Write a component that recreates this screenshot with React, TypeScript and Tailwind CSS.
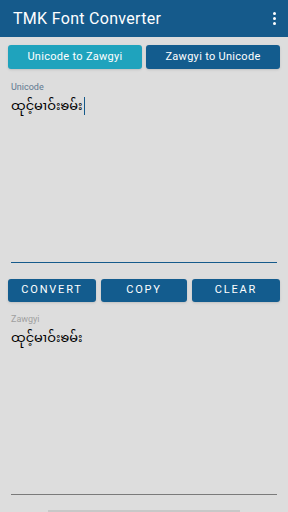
import { useState } from "react";

const SAMPLE = "ထုင့်မၢဝ်းၶမ်း";

export default function App() {
  const [mode, setMode] = useState<"u2z" | "z2u">("u2z");
  const [input, setInput] = useState(SAMPLE);
  const [output, setOutput] = useState(SAMPLE);

  return (
    <div
      className="w-[288px] h-[512px] bg-[#dddddd] flex flex-col overflow-hidden"
      style={{ fontFamily: "Roboto, 'Noto Sans', 'Noto Sans Myanmar', sans-serif" }}
    >
      {/* Toolbar */}
      <div className="h-[37px] bg-[#155a8b] flex items-center justify-between pl-[13px] pr-[12px] shrink-0">
        <span className="text-white text-[16px] tracking-[0.3px]">TMK Font Converter</span>
        <div className="flex flex-col gap-[2px] items-center">
          <span className="w-[3px] h-[3px] rounded-full bg-white" />
          <span className="w-[3px] h-[3px] rounded-full bg-white" />
          <span className="w-[3px] h-[3px] rounded-full bg-white" />
        </div>
      </div>

      {/* Mode tabs */}
      <div className="flex gap-[4px] px-[8px] mt-[8px]">
        <button
          onClick={() => setMode("u2z")}
          className={`flex-1 h-[24px] rounded-[3px] text-white text-[11px] tracking-[0.3px] shadow-sm ${
            mode === "u2z" ? "bg-[#1fa3bd]" : "bg-[#135c8e]"
          }`}
        >
          Unicode to Zawgyi
        </button>
        <button
          onClick={() => setMode("z2u")}
          className={`flex-1 h-[24px] rounded-[3px] text-white text-[11px] tracking-[0.3px] shadow-sm ${
            mode === "z2u" ? "bg-[#1fa3bd]" : "bg-[#135c8e]"
          }`}
        >
          Zawgyi to Unicode
        </button>
      </div>

      {/* Input */}
      <div className="px-[11px] mt-[14px] flex flex-col h-[180px]">
        <span className="text-[9px] text-[#5f7890] leading-none">Unicode</span>
        <div className="flex-1 flex flex-col border-b-[1.5px] border-[#155a8b]">
          <div className="flex items-center mt-[4px]">
            <span className="text-[13px] text-black leading-[20px]">{input}</span>
            <span className="w-[1.5px] h-[18px] bg-[#155a8b] ml-[1px]" />
          </div>
        </div>
      </div>

      {/* Actions */}
      <div className="flex gap-[5px] px-[8px] mt-[16px]">
        <button
          onClick={() => setOutput(input)}
          className="w-[88px] h-[23px] rounded-[3px] bg-[#135c8e] text-white text-[11px] tracking-[1.8px] shadow-sm"
        >
          CONVERT
        </button>
        <button className="flex-1 h-[23px] rounded-[3px] bg-[#135c8e] text-white text-[11px] tracking-[1.8px] shadow-sm">
          COPY
        </button>
        <button
          onClick={() => {
            setInput("");
            setOutput("");
          }}
          className="w-[88px] h-[23px] rounded-[3px] bg-[#135c8e] text-white text-[11px] tracking-[1.8px] shadow-sm"
        >
          CLEAR
        </button>
      </div>

      {/* Output */}
      <div className="px-[11px] mt-[13px] flex flex-col h-[180px]">
        <span className="text-[9px] text-[#a0a0a0] leading-none">Zawgyi</span>
        <div className="flex-1 flex flex-col border-b border-[#7a7a7a]">
          <span className="text-[13px] text-black leading-[20px] mt-[4px]">{output}</span>
        </div>
      </div>

      <div className="flex-1 flex items-end justify-center">
        <div className="w-[192px] h-[2px] bg-[#c8c8c8]" />
      </div>
    </div>
  );
}
